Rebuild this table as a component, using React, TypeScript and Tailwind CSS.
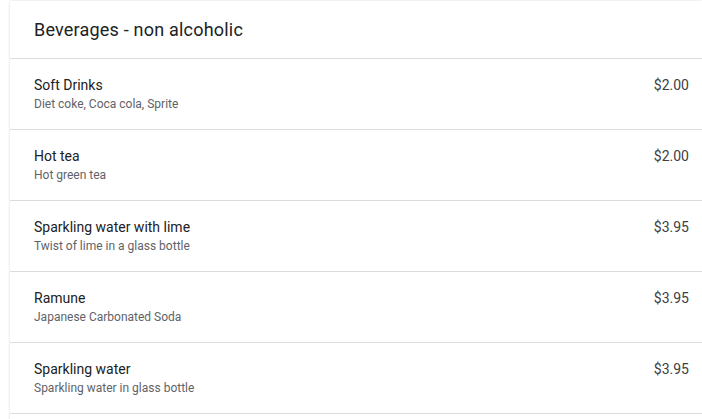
import React from 'react';

const items = [
  { name: 'Soft Drinks', desc: 'Diet coke, Coca cola, Sprite', price: '$2.00' },
  { name: 'Hot tea', desc: 'Hot green tea', price: '$2.00' },
  { name: 'Sparkling water with lime', desc: 'Twist of lime in a glass bottle', price: '$3.95' },
  { name: 'Ramune', desc: 'Japanese Carbonated Soda', price: '$3.95' },
  { name: 'Sparkling water', desc: 'Sparkling water in glass bottle', price: '$3.95' },
];

export default function App() {
  return (
    <div className="min-h-screen bg-white pl-[10px] pt-[1px] font-['Roboto',sans-serif]">
      <div className="bg-white shadow-[0_0_3px_rgba(0,0,0,0.14)] pb-10">
        <div className="h-[57px] pl-6 pt-[15px]">
          <h1 className="text-[18px] leading-7 tracking-[0.2px] text-[#202124]">Beverages - non alcoholic</h1>
        </div>
        {items.map((item) => (
          <div key={item.name} className="flex justify-between border-t border-[#dadce0] pl-6 pr-[13px] pt-[16px] h-[71px]">
            <div>
              <div className="text-[14px] leading-5 text-[#202124]">{item.name}</div>
              <div className="text-[12px] leading-4 text-[#5f6368] mt-[1px]">{item.desc}</div>
            </div>
            <div className="text-[14px] leading-5 text-[#3c4043]">{item.price}</div>
          </div>
        ))}
        <div className="border-t border-[#dadce0]" />
      </div>
    </div>
  );
}
